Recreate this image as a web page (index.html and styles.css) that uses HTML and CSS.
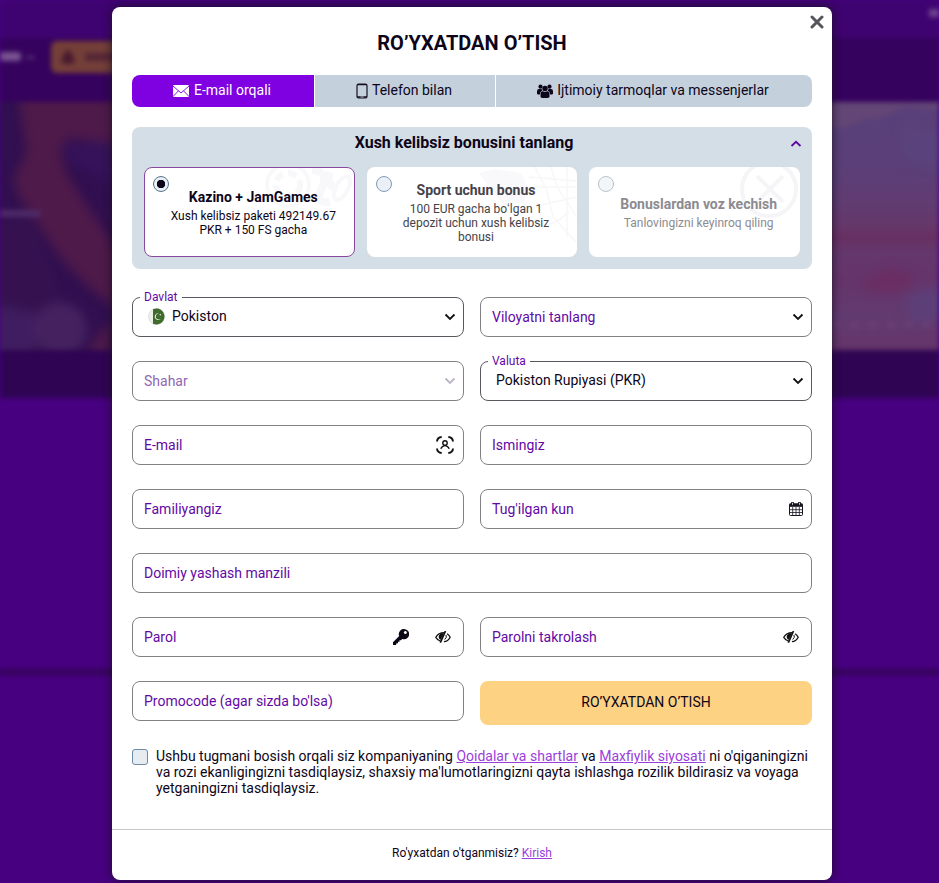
FILE: index.html
```html
<!DOCTYPE html>
<html lang="uz">
  <head>
    <meta charset="UTF-8" />
    <meta name="viewport" content="width=device-width, initial-scale=1.0" />
    <title>Ro’yxatdan o’tish</title>
    <link rel="stylesheet" href="styles.css">
  </head>
  <body>
    <!-- Page behind the modal -->
    <div class="page">
      <div class="topbar"><span class="topbar-dot"></span></div>
      <div class="nav">
        <span class="nav-item"></span>
        <span class="nav-arrow"></span>
        <div class="nav-promo">
          <svg width="16" height="16" viewBox="0 0 16 16"><path d="M8 0l4 5 3 5-2 5H3l-2-5 3-5z" fill="#4a1a30" /></svg>
          <span class="nav-promo-text"></span>
        </div>
      </div>
      <div class="hero">
        <svg width="130" height="250" viewBox="0 0 130 250">
          <rect width="130" height="250" fill="#310f50" />
          <g class="soft">
            <path d="M-10 120L30 118 48 160 60 190 40 260H-10z" fill="#35124f" />
            <path d="M62 44l68-10v70L104 78 72 62z" fill="#35125a" />
            <path d="M18 -10H98l34 0V44L70 36 60 46 66 70 82 96 104 128 118 150V208L92 188 62 158 38 122 18 94 14 76 26 50z" fill="#4e1a4a" />
            <path d="M-10 202q34 8 44 8V260H-10z" fill="#401d60" />
            <circle cx="60" cy="227" r="27" fill="#45225f" />
            <path d="M92 240l20-22v40H88z" fill="#4e1a4a" />
          </g>
          <rect x="-5" y="108" width="46" height="7" rx="3" fill="#4e2a68" />
        </svg>
        <svg width="130" height="250" viewBox="0 0 130 250">
          <defs>
            <linearGradient id="sky" x1="0" y1="0" x2="0" y2="1">
              <stop offset="0" stop-color="#59407a" />
              <stop offset=".25" stop-color="#5b3f78" />
              <stop offset=".4" stop-color="#603c72" />
              <stop offset=".5" stop-color="#653769" />
              <stop offset=".54" stop-color="#682f62" />
              <stop offset=".6" stop-color="#64376d" />
              <stop offset=".72" stop-color="#65346a" />
              <stop offset=".85" stop-color="#623b70" />
              <stop offset="1" stop-color="#65346a" />
            </linearGradient>
          </defs>
          <rect width="130" height="250" fill="url(#sky)" />
          <path d="M0 0h130v8l-34-4-12 6-12 6-16 1-20 8-36 4z" fill="#634675" />
          <g class="soft">
            <path d="M88 24l50 6v40L96 56z" fill="#5a437c" />
            <path d="M54 178l30-14 20 10-8 16H60z" fill="#6b2e64" />
            <path d="M94 194l44-14v36l-34 6z" fill="#5d3f78" />
          </g>
          <path d="M24 223H130" stroke="#6a4377" stroke-width="5" stroke-dasharray="7 11" />
        </svg>
      </div>
      <div class="band"></div>
      <div class="line"></div>
    </div>

    <!-- Registration modal -->
    <div class="modal">
      <button class="close-btn">
        <svg width="14" height="14" viewBox="0 0 14 14"><path d="M2 2l10 10M12 2L2 12" stroke="#55555c" stroke-width="3" stroke-linecap="round" /></svg>
      </button>
      <h1>RO’YXATDAN O’TISH</h1>

      <div class="tabs">
        <div class="tab tab-email active">
          <svg width="16" height="12" viewBox="0 0 16 12"><rect width="16" height="12" rx="1" fill="#fff" /><path d="M0 1l8 7 8-7M0 11.5l5.5-5.7M16 11.5l-5.5-5.7" fill="none" stroke="#7f00e0" stroke-width=".9" /></svg>
          <span>E-mail orqali</span>
        </div>
        <div class="tab tab-phone">
          <svg width="12" height="16" viewBox="0 0 12 16"><rect x="1" y="1" width="10" height="14" rx="1.5" fill="none" stroke="#14101f" stroke-width="1.2" /><path d="M1 1.6h10M1 14h10" stroke="#14101f" stroke-width="1.4" /><path d="M4.5 14h3" stroke="#c7d4de" stroke-width=".8" /></svg>
          <span>Telefon bilan</span>
        </div>
        <div class="tab tab-social">
          <svg width="16" height="14" viewBox="0 0 16 14" fill="#0d0519"><circle cx="8" cy="4.5" r="2.7" /><circle cx="3.5" cy="2.7" r="2.1" /><circle cx="12.5" cy="2.7" r="2.1" /><path d="M3.5 13V10q0-2.8 2.6-2.8Q8 8.6 9.9 7.2q2.6 0 2.6 2.8v3q-1 1-2 1h-5q-1.2 0-2-1z" /><path d="M0 9.5V7.4Q0 5 2 5h2.500q.3 1 1 1.700Q3 7.300 2.900 10.500H1.200Q0 10.500 0 9.500zM16 9.500V7.400Q16 5 14 5h-2.500q-.3 1-1 1.700 2.500.6 2.600 3.800h1.700q1.200 0 1.200-1z" /></svg>
          <span>Ijtimoiy tarmoqlar va messenjerlar</span>
        </div>
      </div>

      <div class="bonus">
        <div class="bonus-header">
          <h2>Xush kelibsiz bonusini tanlang</h2>
          <svg width="12" height="8" viewBox="0 0 12 8"><path d="M1.500 6L6 1.800 10.500 6" fill="none" stroke="#5f089f" stroke-width="1.800" /></svg>
        </div>
        <div class="bonus-list">
          <div class="bonus-card selected">
            <svg class="bonus-art" width="90" height="44" viewBox="0 0 90 44" fill="none" stroke="#f8f8fa">
              <circle cx="24" cy="17" r="21" stroke-width="4" /><circle cx="24" cy="17" r="12" stroke-width="6" stroke-dasharray="9 5" />
              <path d="M48 2q18 2 10 18t8 14M66 4q-4 10 4 16" stroke-width="8" /><ellipse cx="78" cy="20" rx="6" ry="13" stroke-width="4" transform="rotate(28 78 20)" />
            </svg>
            <span class="radio checked"></span>
            <h3>Kazino + JamGames</h3>
            <p>Xush kelibsiz paketi 492149.67 PKR + 150 FS gacha</p>
          </div>
          <div class="bonus-card dim">
            <svg class="bonus-art" width="108" height="76" viewBox="0 0 108 76" fill="none" stroke="#f7f7f9">
              <path d="M10 6l16-4 26 4 8 16-6 14-20 2z" fill="#f9f9fb" stroke="none" />
              <path d="M66 0l12 24 6 26 24 26M82 0l6 20 20 30M66 20h42M72 38l36-8M60 10l48 4M62 58q22 4 38-14M98 0v70" stroke-width="1.500" />
            </svg>
            <span class="radio"></span>
            <h3>Sport uchun bonus</h3>
            <p>100 EUR gacha boʻlgan 1 depozit uchun xush kelibsiz bonusi</p>
          </div>
          <div class="bonus-card faded">
            <svg class="bonus-art" width="60" height="52" viewBox="0 0 60 52" fill="none" stroke="#f5f5f7">
              <circle cx="29" cy="22" r="27" stroke-width="4" /><path d="M17 9l26 26M43 9L17 35" stroke-width="4" />
            </svg>
            <span class="radio"></span>
            <h3>Bonuslardan voz kechish</h3>
            <p>Tanlovingizni keyinroq qiling</p>
          </div>
        </div>
      </div>

      <form class="form">
        <div class="field filled">
          <span class="field-label">Davlat</span>
          <div class="field-value country">
            <svg width="17" height="17" viewBox="0 0 17 17"><circle cx="8.500" cy="8.500" r="8" fill="#eef0ec" stroke="#cfd3cd" stroke-width=".6" /><path d="M5 1.300A8 8 0 1 1 5 15.700z" fill="#3f6b2c" /><path d="M11.300 5.600a3.300 3.300 0 1 0 1.700 4.600 2.900 2.900 0 1 1-1.700-4.600z" fill="#e6f0df" /><circle cx="12.300" cy="6.800" r=".8" fill="#e6f0df" /></svg>
            <span>Pokiston</span>
          </div>
          <svg class="chevron" width="12" height="8" viewBox="0 0 12 8"><path d="M1.500 1.500L6 6l4.500-4.500" /></svg>
        </div>
        <div class="field">
          <span class="placeholder">Viloyatni tanlang</span>
          <svg class="chevron" width="12" height="8" viewBox="0 0 12 8"><path d="M1.500 1.500L6 6l4.500-4.500" /></svg>
        </div>

        <div class="field disabled">
          <span class="placeholder">Shahar</span>
          <svg class="chevron" width="12" height="8" viewBox="0 0 12 8"><path d="M1.500 1.500L6 6l4.500-4.500" /></svg>
        </div>
        <div class="field filled">
          <span class="field-label">Valuta</span>
          <div class="field-value">Pokiston Rupiyasi (PKR)</div>
          <svg class="chevron" width="12" height="8" viewBox="0 0 12 8"><path d="M1.500 1.500L6 6l4.500-4.500" /></svg>
        </div>

        <div class="field">
          <span class="placeholder">E-mail</span>
          <svg class="icon-person" width="18" height="18" viewBox="0 0 18 18" fill="none" stroke="#111" stroke-width="1.900"><path d="M1 5.500Q1.300 1.300 5.700 1M12.300 1q4.400.3 4.700 4.500M17 12.500q-.3 4.200-4.700 4.500M5.700 17Q1.300 16.700 1 12.500" /><circle cx="9" cy="7" r="2.200" stroke-width="1.400" /><path d="M4.800 12.800Q6.300 9.600 9 9.600t4.200 3.200" stroke-width="1.400" /></svg>
        </div>
        <div class="field">
          <span class="placeholder">Ismingiz</span>
        </div>

        <div class="field">
          <span class="placeholder">Familiyangiz</span>
        </div>
        <div class="field">
          <span class="placeholder">Tug'ilgan kun</span>
          <svg width="14" height="14" viewBox="0 0 14 14"><rect x=".5" y="2" width="13" height="11.500" rx="1" fill="#fff" stroke="#17131f" /><path d="M.5 1.500h13v3.300H.5z" fill="#17131f" /><path d="M3.700 5v8.500M7 5v8.500M10.300 5v8.500M1 7.700h12M1 10.500h12" stroke="#17131f" stroke-width=".8" /><path d="M3.500 0v3M10.500 0v3" stroke="#17131f" stroke-width="2.600" /><path d="M3.500 .8v2M10.500 .8v2" stroke="#fff" stroke-width=".8" /></svg>
        </div>

        <div class="field wide">
          <span class="placeholder">Doimiy yashash manzili</span>
        </div>

        <div class="field password">
          <span class="placeholder">Parol</span>
          <svg width="16" height="16" viewBox="0 0 16 16"><path fill-rule="evenodd" fill="#0b0716" d="M11 0a5 5 0 0 1 0 10.300q-1 0-1.800-.3L8 11.200H6.500v1.500H5v1.600H3.500L3 16H0v-2.800L6.200 7Q5.700 6 5.700 5A5.200 5.200 0 0 1 11 0zM12.300 2.100a1.500 1.500 0 1 0 .1 0z" /></svg>
          <svg class="eye" width="16" height="12" viewBox="0 0 16 12"><path d="M5.200 10Q2.500 9 .8 6.300 3.500 1.500 9.300 1.600M12 2.700q2 1.200 3.200 3.500-2.200 4.200-6.300 4.500" fill="none" stroke="#111" stroke-width="1.300" /><path d="M10.500 0L5.300 11.700" stroke="#111" stroke-width="1.700" /><path d="M9 2.500A3.400 3.400 0 0 0 5.700 8.800z" fill="#111" /><path d="M11 4q1.300 2.300-1.300 4.500" fill="none" stroke="#111" /></svg>
        </div>
        <div class="field">
          <span class="placeholder">Parolni takrolash</span>
          <svg class="eye" width="16" height="12" viewBox="0 0 16 12"><path d="M5.200 10Q2.500 9 .8 6.300 3.500 1.500 9.300 1.600M12 2.700q2 1.200 3.200 3.500-2.200 4.200-6.300 4.500" fill="none" stroke="#111" stroke-width="1.300" /><path d="M10.500 0L5.300 11.700" stroke="#111" stroke-width="1.700" /><path d="M9 2.500A3.400 3.400 0 0 0 5.700 8.800z" fill="#111" /><path d="M11 4q1.300 2.300-1.300 4.500" fill="none" stroke="#111" /></svg>
        </div>

        <div class="field">
          <span class="placeholder">Promocode (agar sizda bo'lsa)</span>
        </div>
        <button type="button" class="submit-btn">RO’YXATDAN O’TISH</button>
      </form>

      <div class="terms">
        <span class="checkbox"></span>
        <p>Ushbu tugmani bosish orqali siz kompaniyaning <a href="#">Qoidalar va shartlar</a> va <a href="#">Maxfiylik siyosati</a> ni o'qiganingizni va rozi ekanligingizni tasdiqlaysiz, shaxsiy ma'lumotlaringizni qayta ishlashga rozilik bildirasiz va voyaga yetganingizni tasdiqlaysiz.</p>
      </div>

      <div class="modal-footer">
        Ro'yxatdan o'tganmisiz? <a href="#">Kirish</a>
      </div>
    </div>
  </body>
</html>
```

FILE: styles.css
```css
* {
  box-sizing: border-box;
}
body {
  font-family: Roboto, "Liberation Sans", sans-serif;
  font-size: 14px;
  margin: 0;
  height: 883px;
  overflow: hidden;
  color: #0d0519;
  background: #470080;
}
h1,
h2,
h3,
p {
  margin: 0;
}
svg {
  display: block;
  flex-shrink: 0;
}
a {
  color: #9a3edb;
}

/* Page behind the modal */
.page {
  height: 883px;
  filter: blur(2.5px);
}
.topbar {
  height: 38px;
  background: #3f0371;
  display: flex;
  justify-content: flex-end;
}
.topbar-dot {
  width: 10px;
  height: 8px;
  margin-top: 9px;
  background: #71438f;
}
.nav {
  height: 64px;
  background: #35025d;
  display: flex;
  align-items: flex-start;
}
.nav-item {
  width: 21px;
  height: 9px;
  margin-top: 14px;
  border-radius: 3px;
  background: #795491;
}
.nav-arrow {
  width: 9px;
  height: 3px;
  margin: 18px 0 0 5px;
  background: #543070;
}
.nav-promo {
  width: 120px;
  height: 32px;
  margin: 3px 0 0 16px;
  padding: 8px 9px;
  border-radius: 6px;
  background: #743f38;
  display: flex;
  align-items: center;
  gap: 9px;
}
.nav-promo-text {
  width: 40px;
  height: 8px;
  background: #552636;
}
.hero {
  height: 248px;
  overflow: hidden;
  display: flex;
  justify-content: space-between;
  background: #2f0f4c;
}
.soft {
  filter: blur(5px);
}
.band {
  height: 48px;
  background: #2f0453;
}
.line {
  height: 6px;
  margin-top: 271px;
  background: #340459;
}

/* Modal */
.modal {
  position: absolute;
  top: 7px;
  left: 112px;
  width: 720px;
  height: 873px;
  padding: 25px 20px 0;
  background: #fff;
  border-radius: 8px;
  box-shadow: 0 0 10px rgba(22, 16, 30, 0.85);
}
.close-btn {
  position: absolute;
  top: 8px;
  right: 8px;
  padding: 0;
  border: none;
  background: none;
  cursor: pointer;
}
.modal h1 {
  font-size: 20px;
  line-height: 23px;
  font-weight: 700;
  text-align: center;
}

/* Tabs */
.tabs {
  display: flex;
  gap: 1px;
  height: 32px;
  margin-top: 20px;
  border-radius: 8px;
  overflow: hidden;
}
.tab {
  display: flex;
  align-items: center;
  justify-content: center;
  gap: 4px;
  padding: 0 2px 2px 0;
  background: #c4d1dc;
  line-height: 20px;
}
.tab svg {
  position: relative;
  top: 1px;
}
.tab-email {
  width: 182px;
  gap: 5px;
}
.tab-phone {
  width: 180px;
}
.tab-social {
  flex: 1;
}
.tab.active {
  color: #fff;
  background: #7f00e0;
}

/* Bonus */
.bonus {
  height: 142px;
  margin-top: 20px;
  padding: 0 12px 12px;
  border-radius: 8px;
  background: #d4dee6;
}
.bonus-header {
  display: flex;
  align-items: center;
  height: 40px;
  padding: 0 0 8px;
}
.bonus-header h2 {
  flex: 1;
  padding-right: 6px;
  font-size: 16px;
  font-weight: 700;
  line-height: 20px;
  text-align: center;
}
.bonus-header svg {
  margin: 2px -2px 0 0;
}
.bonus-list {
  display: grid;
  grid-template-columns: repeat(3, 1fr);
  gap: 12px;
}
.bonus-card {
  position: relative;
  height: 90px;
  padding: 0 12px 0 20px;
  border-radius: 8px;
  background: #fff;
  display: flex;
  flex-direction: column;
  justify-content: center;
  gap: 2px;
  text-align: center;
  overflow: hidden;
}
.bonus-card.selected {
  border: 1px solid #884a9e;
}
.bonus-card h3 {
  position: relative;
  font-size: 14px;
  line-height: 20px;
  font-weight: 700;
}
.bonus-card p {
  position: relative;
  font-size: 12px;
  line-height: 14px;
}
.bonus-card.dim {
  color: #45434a;
  padding: 0 20px 0 28px;
}
.bonus-card.faded {
  color: #8c8b90;
}
.bonus-art {
  position: absolute;
  top: 0;
  right: 0;
}
.radio {
  position: absolute;
  top: 9px;
  left: 9px;
  width: 16px;
  height: 16px;
  border: 1px solid #7f9db5;
  border-radius: 50%;
  background: #eaf0f5;
}
.selected .radio {
  top: 8px;
  left: 8px;
}
.radio.checked {
  border-color: #56758a;
  background: radial-gradient(circle, #0d0519 4px, #eaf0f5 4.5px);
}
.faded .radio {
  border-color: #b9c3ca;
  background: #f3f6f8;
}

/* Form */
.form {
  display: grid;
  grid-template-columns: 1fr 1fr;
  grid-auto-rows: 40px;
  gap: 24px 16px;
  margin-top: 28px;
}
.field {
  position: relative;
  display: flex;
  align-items: center;
  justify-content: space-between;
  padding: 0 8px 0 11px;
  border: 1px solid #828286;
  border-radius: 8px;
}
.field.filled {
  border-color: #5a585f;
}
.field.wide {
  grid-column: span 2;
}
.placeholder {
  color: #6209a5;
  flex: 1;
}
.field-label {
  position: absolute;
  top: -8px;
  left: 7px;
  padding: 0 4px;
  background: #fff;
  color: #6209a5;
  font-size: 12px;
  line-height: 14px;
}
.field-value {
  padding: 0 0 2px 4px;
}
.country {
  display: flex;
  align-items: center;
  gap: 7px;
}
.chevron {
  margin-right: -1px;
}
.chevron path {
  fill: none;
  stroke: #111;
  stroke-width: 1.8;
}
.field.disabled .placeholder {
  color: #8f68b3;
}
.field.disabled .chevron path {
  stroke: #bcb3c6;
}
.icon-person {
  margin-right: 1px;
}
.password {
  gap: 26px;
}
.eye {
  margin-right: 4px;
}
.submit-btn {
  height: 44px;
  padding: 0 0 2px;
  border: none;
  border-radius: 8px;
  background: #fed283;
  color: #0d0519;
  font-family: inherit;
  font-size: 14px;
  cursor: pointer;
}

/* Terms */
.terms {
  display: flex;
  gap: 8px;
  margin-top: 27px;
  height: 81px;
}
.terms p {
  flex: 1;
  line-height: 16px;
}
.checkbox {
  width: 16px;
  height: 16px;
  margin-top: 1px;
  border: 1px solid #6c8ba6;
  border-radius: 3px;
  background: #e7ecf0;
}

.modal-footer {
  margin: 0 -20px;
  padding-top: 16px;
  border-top: 1px solid #c7c4ca;
  font-size: 12px;
  line-height: 15px;
  text-align: center;
}
```
